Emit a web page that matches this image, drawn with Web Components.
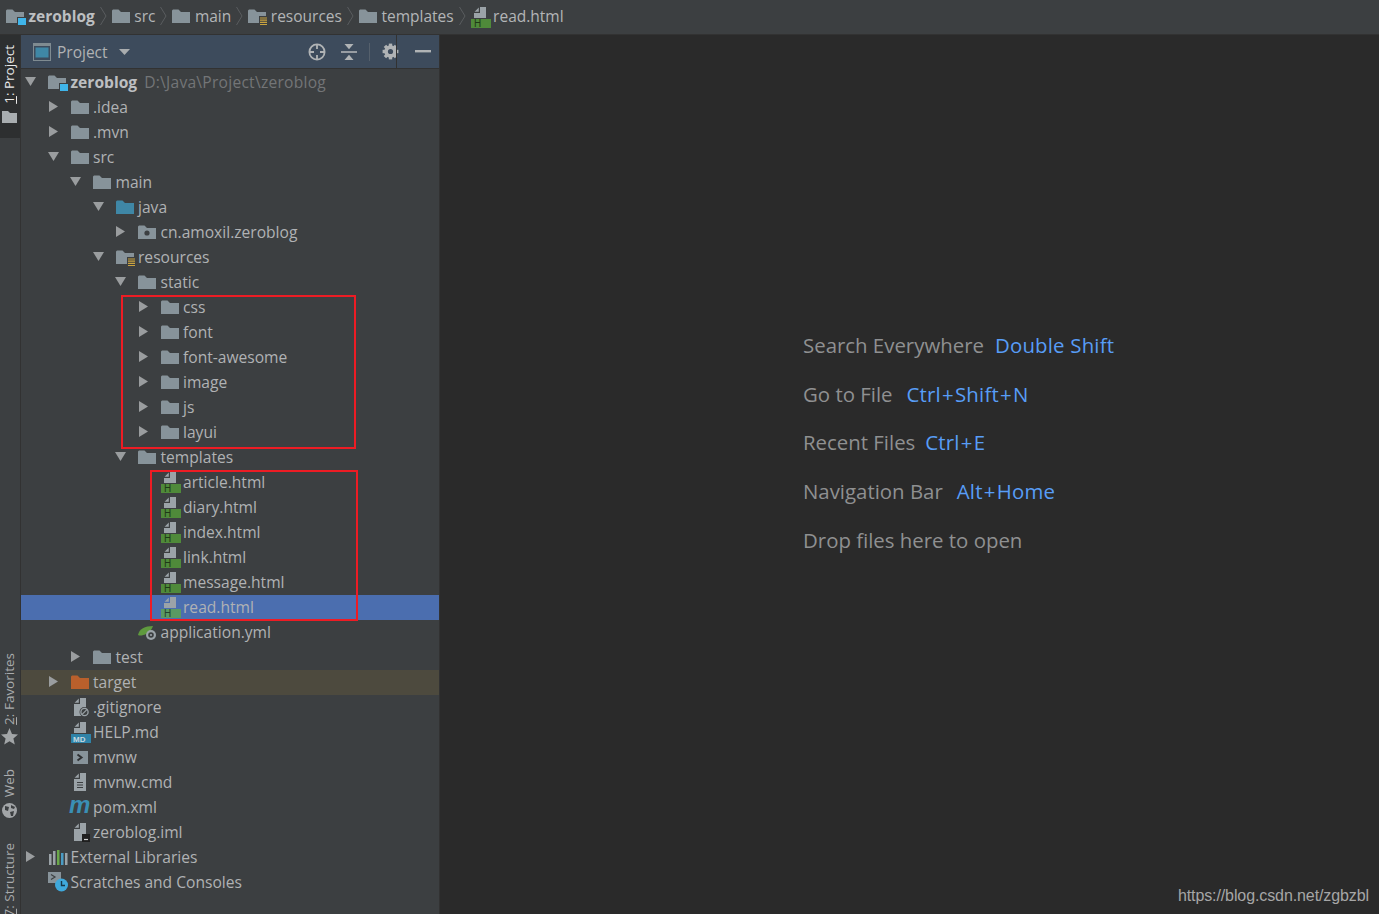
<!DOCTYPE html>
<html>
<head>
<meta charset="utf-8">
<title>zeroblog</title>
<style>
  html, body { margin: 0; height: 100%; background: #2a2a2a; }
  body { font-family: "Open Sans", "Noto Sans", sans-serif; overflow: hidden; }
</style>
</head>
<body>
<ide-window></ide-window>

<script>
const FOLDER = 'M0 1.5 L1 .5 H6.5 L9 3 H18 V14 H0 Z';
const PAGE = 'M9 1 H15 V12 H3 V7 H9 Z M7.8 1.6 V5.8 H3.6 Z';

const folderIcon = (fill, extra = '') =>
  `<svg width="20" height="18" viewBox="0 0 20 18"><path d="${FOLDER}" transform="translate(0 2)" fill="${fill}"/>${extra}</svg>`;

const htmlPage = (label, bar, ink, size = 10) =>
  `<svg width="21" height="21" viewBox="0 0 21 21"><path d="${PAGE}" fill="#9ba3a8"/>
   <rect x="0" y="13" width="20" height="9" fill="${bar}"/>
   <text x="${label.length > 1 ? 2 : 3}" y="21" font-family="Liberation Sans" font-weight="${label.length > 1 ? 'bold' : 'normal'}" font-size="${size}" fill="${ink}">${label}</text></svg>`;

const plainPage = extra =>
  `<svg width="20" height="20" viewBox="0 0 20 20"><path d="M9 1 H15 V19 H3 V7 H9 Z M7.8 1.6 V5.8 H3.6 Z" fill="#9ba3a8"/>${extra}</svg>`;

const gear = (size, fill) => {
  let teeth = '';
  for (let a = 0; a < 360; a += 45) teeth += `<rect x="6.8" y=".6" width="3.4" height="3.4" fill="${fill}" transform="rotate(${a} 8.5 8.5)"/>`;
  return `<svg width="${size}" height="${size}" viewBox="0 0 17 17">${teeth}<circle cx="8.5" cy="8.5" r="4.4" fill="none" stroke="${fill}" stroke-width="3.6"/></svg>`;
};

const ICONS = {
  folder: () => folderIcon('#87939a'),
  module: () => folderIcon('#87939a', '<rect x="11" y="10" width="8" height="8" fill="#3c3f41"/><rect x="12" y="11" width="8" height="7" fill="#3fb5ea"/>'),
  java: () => folderIcon('#3f87a6'),
  pkg: () => folderIcon('#87939a', '<circle cx="9" cy="10" r="2.6" fill="#3c3f41"/>'),
  res: () => folderIcon('#87939a', '<rect x="11" y="9" width="9" height="9" fill="#3c3f41"/><path d="M12 11h7M12 13.2h7M12 15.4h7M12 17.5h7" stroke="#c9a33f" stroke-width="1.2"/>'),
  target: () => folderIcon('#b9602c'),
  html: () => htmlPage('H', '#4f8a3a', '#1f3a17'),
  htmlsel: () => htmlPage('H', '#5a9a63', '#24422f'),
  md: () => htmlPage('MD', '#2f83a8', '#c5d8e0', 8),
  spring: () => `<svg width="20" height="18" viewBox="0 0 20 18"><path d="M0 12 C1 6 7 3 15 3 C14 6 12 9 8 11 C5 12.5 2 13 0 12 Z" fill="#5f9a3e"/><circle cx="13" cy="12" r="5" fill="#9ba3a8"/><circle cx="13" cy="12" r="2.8" fill="#3c3f41"/><circle cx="13" cy="12" r="1.1" fill="#9ba3a8"/></svg>`,
  ignore: () => plainPage('<circle cx="13.5" cy="15" r="5" fill="#3c3f41"/><circle cx="13.5" cy="15" r="3.6" fill="none" stroke="#9ba3a8" stroke-width="1.3"/><path d="M10.9 17.6 L16.1 12.4" stroke="#9ba3a8" stroke-width="1.2"/>'),
  shell: () => `<svg width="20" height="18" viewBox="0 0 20 18"><rect x="2" y="3" width="15" height="13" fill="#87939a"/><path d="M6.5 6.5 L10.5 9.5 L6.5 12.5" fill="none" stroke="#2f3133" stroke-width="2"/></svg>`,
  cmd: () => plainPage('<path d="M6 10.5h6M6 13h6M6 15.5h6" stroke="#3c3f41" stroke-width="1"/>'),
  maven: () => `<svg width="22" height="20" viewBox="0 0 22 20"><text x="-2" y="16" font-family="Liberation Sans" font-style="italic" font-weight="bold" font-size="24" fill="#3a8fb5">m</text></svg>`,
  iml: () => plainPage('<rect x="11" y="12" width="8" height="8" fill="#1f1f1f"/><path d="M13 17.5h4" stroke="#d0d0d0" stroke-width="1.2"/>'),
  libs: () => `<svg width="20" height="18" viewBox="0 0 20 18"><path d="M1 6h2.5v11H1zM5 3h2.5v14H5zM17 5h2.5v12H17z" fill="#9ba3a8"/><path d="M9 2h2.5v15H9z" fill="#6aa84a"/><path d="M13 5h2.5v12H13z" fill="#4a9cc5"/></svg>`,
  scratch: () => `<svg width="22" height="22" viewBox="0 0 22 22"><rect x="0" y="1" width="13" height="11" fill="#87939a"/><path d="M3 3.5 L7 6 L3 8.5" fill="none" stroke="#3c3f41" stroke-width="1.2"/><circle cx="13.5" cy="14" r="6.5" fill="#3fa9dc"/><path d="M13.5 10 V14.5 H17" fill="none" stroke="#17384a" stroke-width="1.4"/></svg>`
};

class TreeIcon extends HTMLElement {
  connectedCallback() {
    const shadow = this.attachShadow({ mode: 'open' });
    shadow.innerHTML = `<style>
      :host { display: inline-flex; align-items: center; justify-content: flex-start; }
      svg { display: block; overflow: visible; }
    </style>${ICONS[this.getAttribute('type')]()}`;
  }
}

class NavCrumb extends HTMLElement {
  connectedCallback() {
    const shadow = this.attachShadow({ mode: 'open' });
    const last = this.hasAttribute('last');
    shadow.innerHTML = `<style>
      :host { display: flex; align-items: center; height: 100%; font-size: var(--nav-size); }
      tree-icon { margin-right: 2.5px; width: 20px; }
      .sep { margin: 0 5px; display: block; }
    </style>
    <tree-icon type="${this.getAttribute('icon')}"></tree-icon>
    <slot></slot>
    ${last ? '' : '<svg class="sep" width="7" height="20" viewBox="0 0 7 20"><path d="M.5 1 L6 10 L.5 19" fill="none" stroke="#5a5d5f"/></svg>'}`;
  }
}

class NavBar extends HTMLElement {
  connectedCallback() {
    const shadow = this.attachShadow({ mode: 'open' });
    shadow.innerHTML = `<style>
      :host {
        display: flex; align-items: center; box-sizing: border-box;
        height: 35px; padding-left: 6px; padding-bottom: 2px;
        background: #3c3f41; border-bottom: 1px solid #323232;
        color: #b3b5b7; --nav-size: 15.5px;
      }
      b { color: #bdbfc1; }
    </style>
    <nav-crumb icon="module"><b>zeroblog</b></nav-crumb>
    <nav-crumb icon="folder">src</nav-crumb>
    <nav-crumb icon="folder">main</nav-crumb>
    <nav-crumb icon="res">resources</nav-crumb>
    <nav-crumb icon="folder">templates</nav-crumb>
    <nav-crumb icon="html" last>read.html</nav-crumb>`;
  }
}

class StripeTab extends HTMLElement {
  connectedCallback() {
    const shadow = this.attachShadow({ mode: 'open' });
    shadow.innerHTML = `<style>
      :host {
        display: flex; flex-direction: column; align-items: center; gap: 4px;
        box-sizing: border-box; width: 20px; flex: none; padding-right: 2px;
        color: #a9abad; font-size: 13.5px;
      }
      :host([active]) { background: #2d2f30; color: #e8e8e8; height: 103px; padding-top: 10px; gap: 6px; }
      :host(.fav) { gap: 3px; }
      :host(.web) { gap: 6px; }
      .label { writing-mode: vertical-rl; transform: rotate(180deg); line-height: 18px; white-space: nowrap; }
    </style>
    <span class="label"><slot></slot></span>
    <slot name="icon"></slot>`;
  }
}

class ToolStripe extends HTMLElement {
  connectedCallback() {
    const shadow = this.attachShadow({ mode: 'open' });
    shadow.innerHTML = `<style>
      :host {
        display: flex; flex-direction: column; flex: none; width: 20px;
        background: #3c3f41; border-right: 1px solid #323232; overflow: hidden;
      }
      .push { flex: none; height: 515px; }
      stripe-tab.fav { margin-bottom: 24px; }
      stripe-tab.web { margin-bottom: 25px; }
      svg { display: block; }
    </style>
    <stripe-tab active><u>1</u>: Project
      <svg slot="icon" width="15" height="13" viewBox="0 0 15 13"><path d="M0 1 H6 L8 3 H15 V13 H0 Z" fill="#a8adb0"/></svg>
    </stripe-tab>
    <div class="push"></div>
    <stripe-tab class="fav"><u>2</u>: Favorites
      <svg slot="icon" width="17" height="17" viewBox="0 0 17 17"><path d="M8.5 0 L11 6 L17 6.5 L12.4 10.5 L13.8 16.5 L8.5 13.3 L3.2 16.5 L4.6 10.5 L0 6.5 L6 6 Z" fill="#a2a5a7"/></svg>
    </stripe-tab>
    <stripe-tab class="web">Web
      <svg slot="icon" width="15" height="15" viewBox="0 0 15 15"><circle cx="7.5" cy="7.5" r="7.5" fill="#a2a5a7"/><path d="M3 3 L7 4 L6 8 L3 7 Z M8 9 L12 8 L11 13 L9 13 Z M9 2 L13 4 L12 6 L9 5 Z" fill="#3c3f41"/></svg>
    </stripe-tab>
    <stripe-tab><u>7</u>: Structure</stripe-tab>`;
  }
}

class TreeRow extends HTMLElement {
  connectedCallback() {
    const shadow = this.attachShadow({ mode: 'open' });
    const depth = Number(this.getAttribute('depth') || 0);
    const arrow = this.getAttribute('arrow');
    const glyph = arrow === 'open'
      ? '<path d="M0 1 H11 L5.5 10 Z" fill="#9a9d9f"/>'
      : arrow === 'closed' ? '<path d="M1 0 L10 5.5 L1 11 Z" fill="#9a9d9f"/>' : '';
    shadow.innerHTML = `<style>
      :host {
        display: flex; align-items: center; box-sizing: border-box; height: 25px;
        padding-left: calc(5px + 22.5px * ${depth}); padding-bottom: 2px; white-space: nowrap;
        color: #b0b2b4; font-size: 15.6px;
      }
      :host([selected]) { background: #4b6eaf; }
      :host([ignored]) { background: #4d4a3e; }
      .arrow { width: 22px; flex: none; }
      .arrow svg { display: block; margin-left: -1px; }
      tree-icon { width: 22.5px; flex: none; }
      ::slotted(b) { color: #bdbfc1; }
      ::slotted(i) { color: #737577; font-style: normal; margin-left: 7px; letter-spacing: .25px; }
    </style>
    <span class="arrow"><svg width="11" height="11" viewBox="0 0 11 11">${glyph}</svg></span>
    <tree-icon type="${this.getAttribute('icon')}"></tree-icon>
    <slot></slot>`;
  }
}

class PanelHeader extends HTMLElement {
  connectedCallback() {
    const shadow = this.attachShadow({ mode: 'open' });
    shadow.innerHTML = `<style>
      :host {
        display: flex; align-items: center; box-sizing: border-box; height: 34px;
        padding-left: 12px; background: #3d4b5c; border-bottom: 1px solid #323232;
        color: #b0b2b4; font-size: 15.5px; flex: none;
      }
      .title { margin-left: 6px; }
      .drop { margin-left: 11px; }
      .tools { display: flex; align-items: center; margin-left: auto; height: 100%; }
      .t { display: flex; justify-content: center; width: 32px; }
      .gear { margin-right: 1px; }
      .bar { width: 1px; height: 18px; background: #55606c; margin: 0 4px; }
      svg { display: block; }
      .line { position: absolute; left: 375px; top: 0; width: 1px; height: 33px; background: #323232; }
    </style>
    <svg width="18" height="18" viewBox="0 0 18 18"><rect x=".5" y=".5" width="17" height="17" fill="none" stroke="#7f8b91"/><rect x="1" y="1" width="16" height="2" fill="#7f8b91"/><rect x="2.5" y="4.5" width="13" height="10" fill="#3f87a6"/></svg>
    <span class="title">Project</span>
    <svg class="drop" width="11" height="6" viewBox="0 0 11 6"><path d="M0 0 H11 L5.5 6 Z" fill="#a9acae"/></svg>
    <div class="tools">
      <span class="t"><svg width="18" height="18" viewBox="0 0 18 18" fill="none" stroke="#b0b3b5" stroke-width="1.8"><circle cx="9" cy="9" r="7.6"/><path d="M9 1v5M9 12v5M1 9h5M12 9h5"/></svg></span>
      <span class="t"><svg width="16" height="16" viewBox="0 0 16 16"><path d="M0 7.2h16v1.6H0z" fill="#b0b3b5"/><path d="M3.5 0h9L8 5.2zM8 10.8 12.5 16h-9z" fill="#b0b3b5"/></svg></span>
      <span class="bar"></span>
      <span class="t gear">${gear(17, '#b0b3b5')}</span>
      <span class="t"><svg width="16" height="3" viewBox="0 0 16 3"><rect width="16" height="2.4" fill="#b0b3b5"/></svg></span>
    </div>
    <span class="line"></span>`;
  }
}

class ProjectPanel extends HTMLElement {
  connectedCallback() {
    const shadow = this.attachShadow({ mode: 'open' });
    shadow.innerHTML = `<style>
      :host {
        display: flex; flex-direction: column; position: relative; flex: none; box-sizing: border-box;
        width: 419px; background: #3c3f41; border-right: 1px solid #323232;
      }
      .tree { padding-top: 1px; }
      .mark { position: absolute; box-sizing: border-box; border: 2px solid #ed1c24; pointer-events: none; }
      .m1 { left: 100px; top: 260px; width: 235px; height: 154px; }
      .m2 { left: 129px; top: 435px; width: 208px; height: 151px; }
    </style>
    <panel-header></panel-header>
    <div class="tree">
      <tree-row depth="0" arrow="open" icon="module"><b>zeroblog</b><i>D:\\Java\\Project\\zeroblog</i></tree-row>
      <tree-row depth="1" arrow="closed" icon="folder">.idea</tree-row>
      <tree-row depth="1" arrow="closed" icon="folder">.mvn</tree-row>
      <tree-row depth="1" arrow="open" icon="folder">src</tree-row>
      <tree-row depth="2" arrow="open" icon="folder">main</tree-row>
      <tree-row depth="3" arrow="open" icon="java">java</tree-row>
      <tree-row depth="4" arrow="closed" icon="pkg">cn.amoxil.zeroblog</tree-row>
      <tree-row depth="3" arrow="open" icon="res">resources</tree-row>
      <tree-row depth="4" arrow="open" icon="folder">static</tree-row>
      <tree-row depth="5" arrow="closed" icon="folder">css</tree-row>
      <tree-row depth="5" arrow="closed" icon="folder">font</tree-row>
      <tree-row depth="5" arrow="closed" icon="folder">font-awesome</tree-row>
      <tree-row depth="5" arrow="closed" icon="folder">image</tree-row>
      <tree-row depth="5" arrow="closed" icon="folder">js</tree-row>
      <tree-row depth="5" arrow="closed" icon="folder">layui</tree-row>
      <tree-row depth="4" arrow="open" icon="folder">templates</tree-row>
      <tree-row depth="5" icon="html">article.html</tree-row>
      <tree-row depth="5" icon="html">diary.html</tree-row>
      <tree-row depth="5" icon="html">index.html</tree-row>
      <tree-row depth="5" icon="html">link.html</tree-row>
      <tree-row depth="5" icon="html">message.html</tree-row>
      <tree-row depth="5" icon="htmlsel" selected>read.html</tree-row>
      <tree-row depth="4" icon="spring">application.yml</tree-row>
      <tree-row depth="2" arrow="closed" icon="folder">test</tree-row>
      <tree-row depth="1" arrow="closed" icon="target" ignored>target</tree-row>
      <tree-row depth="1" icon="ignore">.gitignore</tree-row>
      <tree-row depth="1" icon="md">HELP.md</tree-row>
      <tree-row depth="1" icon="shell">mvnw</tree-row>
      <tree-row depth="1" icon="cmd">mvnw.cmd</tree-row>
      <tree-row depth="1" icon="maven">pom.xml</tree-row>
      <tree-row depth="1" icon="iml">zeroblog.iml</tree-row>
      <tree-row depth="0" arrow="closed" icon="libs">External Libraries</tree-row>
      <tree-row depth="0" icon="scratch">Scratches and Consoles</tree-row>
    </div>
    <div class="mark m1"></div>
    <div class="mark m2"></div>`;
  }
}

class HintLine extends HTMLElement {
  connectedCallback() {
    const shadow = this.attachShadow({ mode: 'open' });
    const keys = this.getAttribute('keys');
    const gap = this.getAttribute('gap') || 12;
    const label = keys ? keys.replace(/\+/g, '<span class="plus">+</span>') : '';
    shadow.innerHTML = `<style>
      :host { display: flex; gap: ${gap}px; height: 48.75px; align-items: center; color: #8f9091; font-size: 20.4px; white-space: nowrap; }
      .keys { color: #589df6; letter-spacing: .2px; }
      .plus { padding: 0 1.1px; }
    </style>
    <span><slot></slot></span>${keys ? `<span class="keys">${label}</span>` : ''}`;
  }
}

class WelcomePane extends HTMLElement {
  connectedCallback() {
    const shadow = this.attachShadow({ mode: 'open' });
    shadow.innerHTML = `<style>
      :host {
        display: flex; flex-direction: column; flex: 1; position: relative;
        box-sizing: border-box; padding: 285.6px 0 0 363px; background: #2a2a2a;
      }
      .mark {
        position: absolute; right: 10px; bottom: 9px;
        font: 16px "Liberation Sans", Arial, sans-serif; color: #a6a6a6;
        letter-spacing: -.1px;
      }
    </style>
    <hint-line keys="Double Shift" gap="11">Search Everywhere</hint-line>
    <hint-line keys="Ctrl+Shift+N" gap="14">Go to File</hint-line>
    <hint-line keys="Ctrl+E" gap="10">Recent Files</hint-line>
    <hint-line keys="Alt+Home" gap="14">Navigation Bar</hint-line>
    <hint-line>Drop files here to open</hint-line>
    <div class="mark">https://blog.csdn.net/zgbzbl</div>`;
  }
}

class IdeWindow extends HTMLElement {
  connectedCallback() {
    const shadow = this.attachShadow({ mode: 'open' });
    shadow.innerHTML = `<style>
      :host { display: flex; flex-direction: column; height: 914px; overflow: hidden; }
      .body { display: flex; flex: 1; min-height: 0; }
    </style>
    <nav-bar></nav-bar>
    <div class="body">
      <tool-stripe></tool-stripe>
      <project-panel></project-panel>
      <welcome-pane></welcome-pane>
    </div>`;
  }
}

customElements.define('tree-icon', TreeIcon);
customElements.define('nav-crumb', NavCrumb);
customElements.define('nav-bar', NavBar);
customElements.define('stripe-tab', StripeTab);
customElements.define('tool-stripe', ToolStripe);
customElements.define('tree-row', TreeRow);
customElements.define('panel-header', PanelHeader);
customElements.define('project-panel', ProjectPanel);
customElements.define('hint-line', HintLine);
customElements.define('welcome-pane', WelcomePane);
customElements.define('ide-window', IdeWindow);
</script>
</body>
</html>
